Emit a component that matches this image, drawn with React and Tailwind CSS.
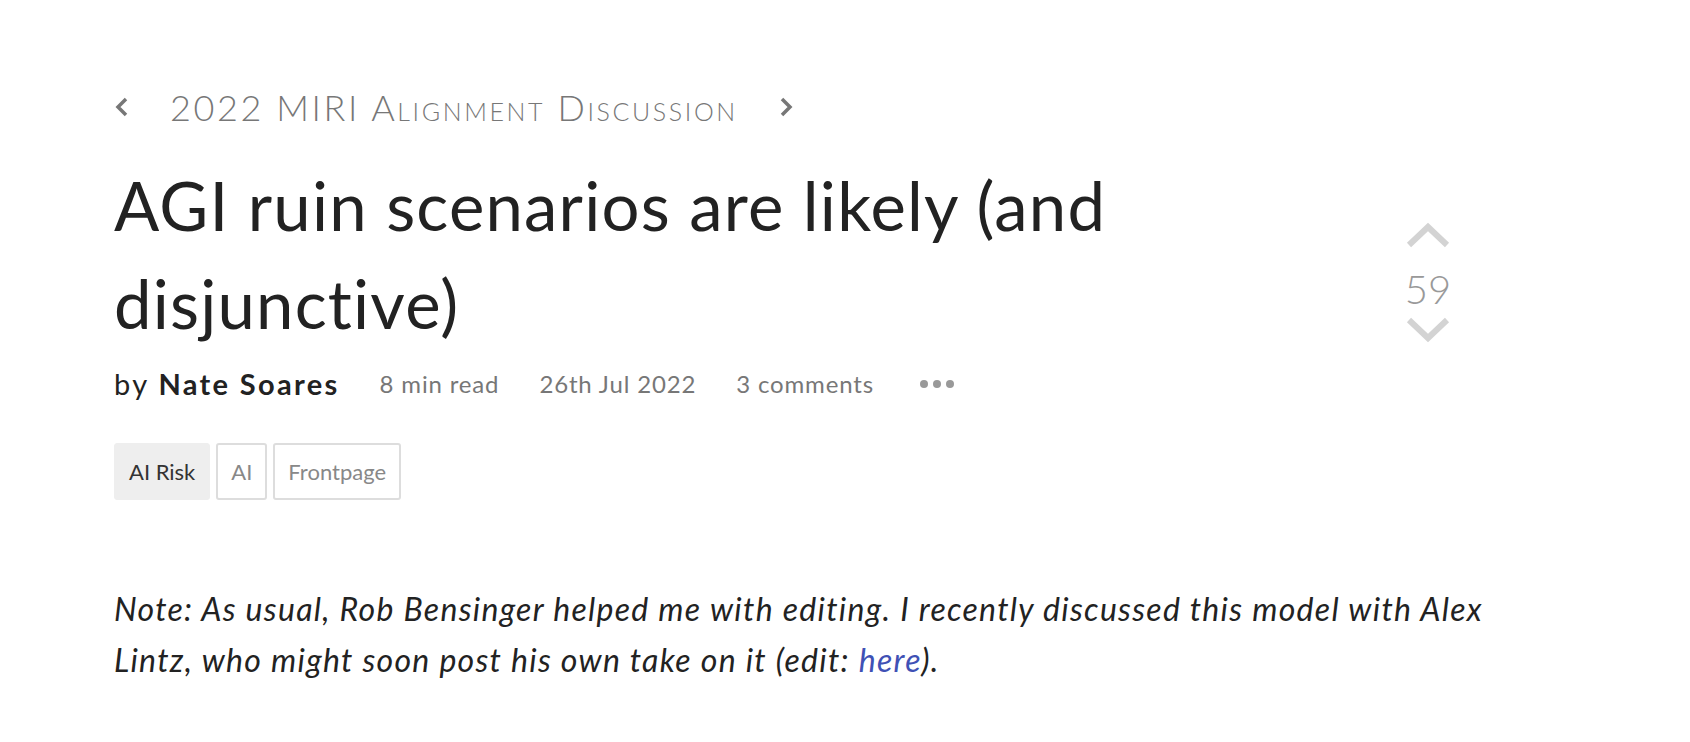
import React from 'react';

const ChevronLeft = () => (
  <svg width="15" height="20" viewBox="0 0 15 20" className="text-[#777]">
    <path d="M12 2 L4 10 L12 18" fill="none" stroke="currentColor" strokeWidth="3.5" />
  </svg>
);

const ChevronRight = () => (
  <svg width="15" height="20" viewBox="0 0 15 20" className="text-[#777]">
    <path d="M3 2 L11 10 L3 18" fill="none" stroke="currentColor" strokeWidth="3.5" />
  </svg>
);

const VoteArrow = ({ down }) => (
  <svg width="44" height="26" viewBox="0 0 44 26" className="text-[#d3d3d3]">
    <path
      d={down ? 'M3 3 L22 21 L41 3' : 'M3 23 L22 5 L41 23'}
      fill="none"
      stroke="currentColor"
      strokeWidth="6"
    />
  </svg>
);

const Tag = ({ label, active }) => (
  <span
    className={
      active
        ? 'h-[57px] px-[14px] flex items-center rounded-[3px] bg-[#eeeeee] text-[#333] border border-[#eeeeee]'
        : 'h-[57px] px-[13px] flex items-center rounded-[3px] border-2 border-[#dddddd] text-[#888]'
    }
  >
    {label}
  </span>
);

const App = () => {
  return (
    <div className="min-h-[742px] bg-white font-['Lato',sans-serif]">
      <div className="pl-[114px] pt-[84px] pr-[240px] flex">
        <div className="w-[1180px]">
          <div className="flex items-center h-[46px] text-[#777]">
            <ChevronLeft />
            <span className="ml-[41px] text-[36px] [font-variant:small-caps] tracking-[2.6px] font-light">
              2022 MIRI Alignment Discussion
            </span>
            <span className="ml-[41px]">
              <ChevronRight />
            </span>
          </div>

          <h1 className="mt-[26px] text-[67px] leading-[98px] tracking-[1.2px] text-[#222] max-w-[1100px]">
            AGI ruin scenarios are likely (and disjunctive)
          </h1>

          <div className="flex items-center mt-[12px] h-[40px] text-[#777] text-[24px] tracking-[0.035em]">
            <span className="text-[#222] text-[29px] tracking-[0.08em]">
              by <span className="font-bold">Nate Soares</span>
            </span>
            <span className="ml-[40px]">8 min read</span>
            <span className="ml-[40px]">26th Jul 2022</span>
            <span className="ml-[40px]">3 comments</span>
            <span className="ml-[46px] flex gap-[5px]">
              <span className="w-[8px] h-[8px] rounded-full bg-[#999]" />
              <span className="w-[8px] h-[8px] rounded-full bg-[#999]" />
              <span className="w-[8px] h-[8px] rounded-full bg-[#999]" />
            </span>
          </div>

          <div className="flex gap-[6px] mt-[39px] text-[22px]">
            <Tag label="AI Risk" active />
            <Tag label="AI" />
            <Tag label="Frontpage" />
          </div>
        </div>

        <div className="ml-auto mt-[138px] flex flex-col items-center w-[44px] h-fit">
          <VoteArrow />
          <span className="mt-[17px] text-[40px] leading-[48px] text-[#999] font-light">59</span>
          <span className="mt-[4px]">
            <VoteArrow down />
          </span>
        </div>
      </div>

      <p className="pl-[114px] w-[1514px] mt-[83px] text-[32px] leading-[51px] tracking-[1.3px] italic text-[#222]">
        Note: As usual, Rob Bensinger helped me with editing. I recently discussed this model with Alex Lintz,
        who might soon post his own take on it (edit: <a className="text-[#3f51b5]">here</a>).
      </p>
    </div>
  );
};

export default App;
